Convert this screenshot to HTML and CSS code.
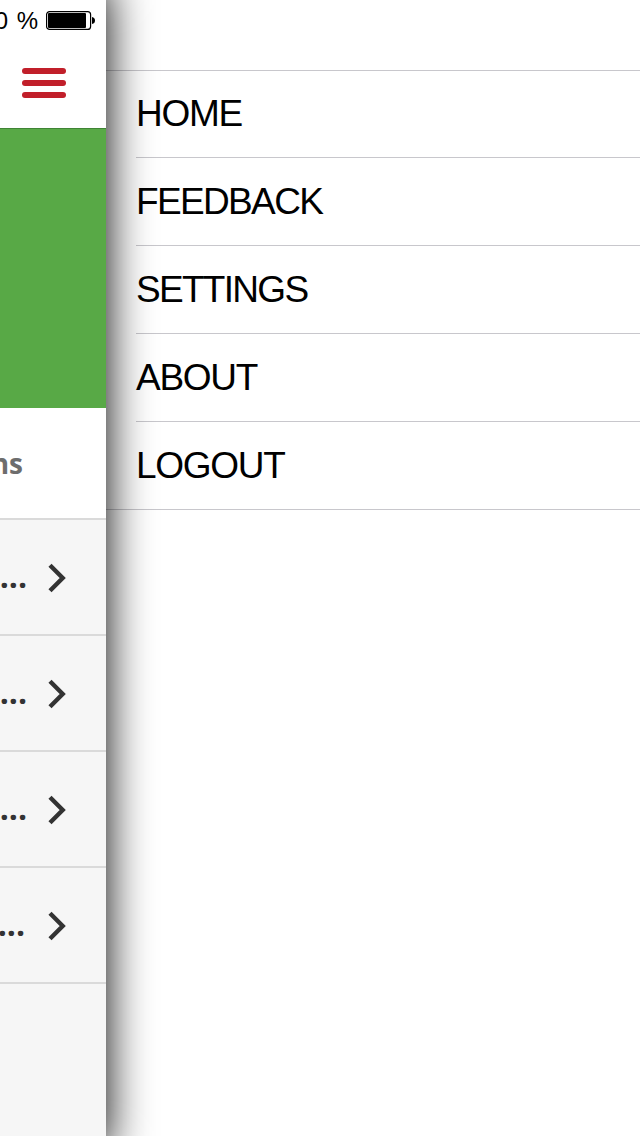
FILE: index.html
```
<!DOCTYPE html>
<html lang="en">
<head>
<meta charset="utf-8">
<title>Menu</title>
<link rel="stylesheet" href="styles.css">
</head>
<body>
<div class="screen">
  <main class="page">
    <header class="page-header">
      <div class="status"><span class="percent">100 %</span>
        <svg class="battery" width="50" height="20" viewBox="0 0 50 20"><rect x=".6" y=".6" width="44" height="17.8" rx="3" fill="#fff" stroke="#000" stroke-width="1.2"/><rect x="2" y="2" width="38" height="15" rx="1"/><path d="M46 6q3 .5 3 3.5t-3 3.5z"/></svg>
      </div>
      <div class="burger"><i class="bar"></i><i class="bar"></i><i class="bar"></i></div>
    </header>
    <div class="banner"></div>
    <div class="tab"><span>ns</span></div>
    <div class="row"><span class="dots">...</span><svg class="chevron" width="20" height="30" viewBox="0 0 20 30"><path d="M3 2.3 15.7 15 3 27.7"/></svg></div>
    <div class="row"><span class="dots">...</span><svg class="chevron" width="20" height="30" viewBox="0 0 20 30"><path d="M3 2.3 15.7 15 3 27.7"/></svg></div>
    <div class="row"><span class="dots">...</span><svg class="chevron" width="20" height="30" viewBox="0 0 20 30"><path d="M3 2.3 15.7 15 3 27.7"/></svg></div>
    <div class="row row-last"><span class="dots">...</span><svg class="chevron" width="20" height="30" viewBox="0 0 20 30"><path d="M3 2.3 15.7 15 3 27.7"/></svg></div>
  </main>
  <nav class="menu">
    <div class="menu-list">
      <a class="item home">HOME</a>
      <a class="item feedback">FEEDBACK</a>
      <a class="item settings">SETTINGS</a>
      <a class="item about">ABOUT</a>
      <a class="item logout">LOGOUT</a>
    </div>
  </nav>
</div>
</body>
</html>
```
FILE: styles.css
```
* { box-sizing: border-box; }
body { margin: 0; background: #fff; }
.screen { display: flex; width: 640px; height: 1136px; overflow: hidden; }
.page {
  position: relative;
  z-index: 1;
  width: 106px;
  flex: none;
  background: #f6f6f6;
}
.page::before {
  content: "";
  position: absolute;
  z-index: -1;
  inset: -16px 0;
  background: #f6f6f6;
  box-shadow: 0 0 46px #000;
}
.page-header { height: 129px; background: #fff; border-bottom: 1px solid #3f8434; }
.status {
  display: flex;
  justify-content: flex-end;
  align-items: center;
  height: 40px;
  padding-right: 10px;
  gap: 8px;
  overflow: hidden;
  font: 24px/40px "Liberation Sans", Arial, sans-serif;
}
.percent { white-space: nowrap; word-spacing: 2px; padding-top: 2px; }
.battery { flex: none; margin-top: 2px; }
.burger { display: flex; flex-direction: column; gap: 6px; padding: 28px 0 0 22px; }
.bar { width: 44px; height: 6px; border-radius: 3px; background: #c11f2a; }
.banner { height: 279px; background: #58a946; }
.tab {
  display: flex;
  justify-content: flex-end;
  height: 112px;
  padding-right: 83px;
  background: #fff;
  border-bottom: 2px solid #dadada;
  color: #6d6d6d;
  font: bold 28px/110px "Open Sans", sans-serif;
}
.row {
  display: flex;
  justify-content: flex-end;
  align-items: center;
  height: 116px;
  padding-right: 38.6px;
  border-bottom: 2px solid #dadada;
}
.dots {
  margin-right: 20.4px;
  padding-bottom: 2px;
  color: #333;
  font: bold 32px/112px "Open Sans", sans-serif;
}
.row-last .dots { margin-right: 22.4px; }
.chevron { flex: none; margin-top: 2px; }
.chevron path { fill: none; stroke: #333; stroke-width: 4.4; }
.menu { flex: 1; padding-top: 70px; }
.menu-list { border-top: 1px solid #c8c7cc; border-bottom: 1px solid #c8c7cc; }
.item {
  display: block;
  height: 88px;
  margin-left: 30px;
  border-bottom: 1px solid #c8c7cc;
  color: #000;
  font: 37px/88px "Liberation Sans", Arial, sans-serif;
  letter-spacing: -1.3px;
}
.home { height: 87px; line-height: 86px; }
.feedback { letter-spacing: -1.65px; }
.settings { letter-spacing: -1.7px; }
.logout { height: 87px; border-bottom: 0; }
```
